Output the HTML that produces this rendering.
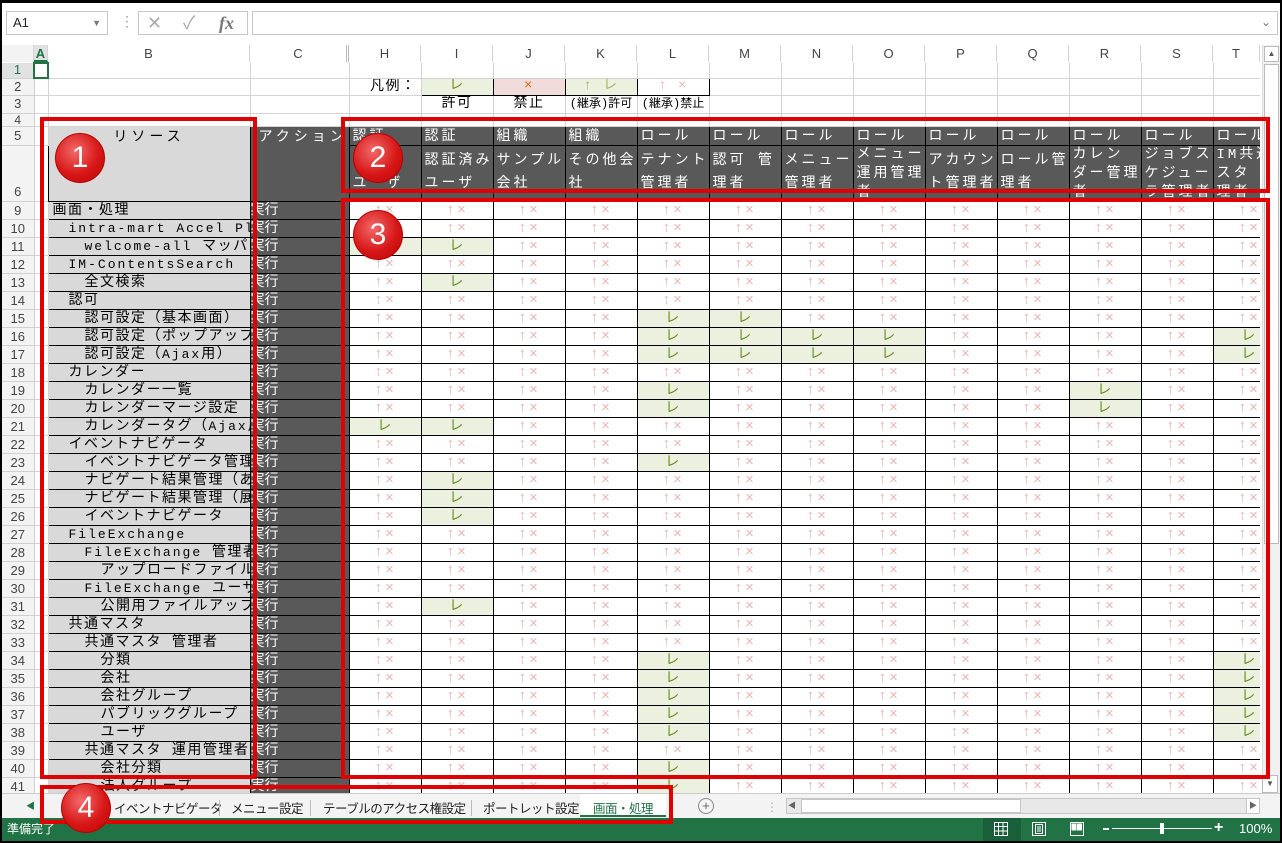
<!DOCTYPE html>
<html><head><meta charset="utf-8">
<style>
*{margin:0;padding:0;box-sizing:border-box}
body{width:1282px;height:843px;background:#000;position:relative;overflow:hidden;font-family:"Liberation Sans","Noto Sans CJK JP",sans-serif}
#win{position:absolute;left:2px;top:3px;width:1278px;height:838px;background:#fff;overflow:hidden}
.abs{position:absolute}
#grid{position:absolute;left:0;top:59px;width:1258px;height:731px;overflow:hidden}
table{border-collapse:collapse;table-layout:fixed;width:1283px;font-family:"Liberation Mono","Noto Sans CJK JP",monospace;font-size:14px;letter-spacing:1.5px}
td{border-right:1px solid #d4d4d4;border-bottom:1px solid #d4d4d4;white-space:nowrap;overflow:hidden;padding:0;line-height:14px}
td>div{overflow:hidden}
td.n{background:#f3f3f3;color:#444;text-align:center;font-family:"Liberation Sans",sans-serif;font-size:13px;letter-spacing:0;border-color:#d0d0d0}
tr.d td{height:18px;padding-top:1px}
.d td.r{background:#d9d9d9;border:1px solid #000;padding-left:4px}
.d td.c{background:#595959;color:#fff;border:1px solid #000;letter-spacing:0}
.d td.x{border:1px solid #000;text-align:center;color:#e6b8b7;font-size:15px;letter-spacing:2px}
.d td.g{border:1px solid #000;text-align:center;color:#6b8e23;background:#ebf1de;font-size:14px}
.h td.hd{background:#595959;color:#fff;border:1px solid #000;padding-left:3px;letter-spacing:3px;vertical-align:top}
.l{font-size:13px;letter-spacing:2px}
.i1{padding-left:20px!important}.i2{padding-left:36px!important}.i3{padding-left:52px!important}
.box{position:absolute;border:4px solid #e00000}
.cir{position:absolute;width:50px;height:50px;border-radius:50%;background:radial-gradient(circle at 40% 35%,#f26a6a,#d81818 55%,#b80000);border:1px solid #b00;color:#fff;font-size:30px;text-align:center;line-height:48px;font-family:"Liberation Sans",sans-serif}
.ch{position:absolute;top:42px;height:17px;font-size:13px;color:#444;text-align:center;border-right:1px solid #d4d4d4;line-height:17px;background:#fff}
.tab{position:absolute;top:794px;height:22px;font-size:12.5px;line-height:22px;color:#222;font-family:"Noto Sans CJK JP",sans-serif;letter-spacing:-0.5px}
.h6{height:55px;line-height:23px;padding-top:4px}
.h6b{height:55px;line-height:19px}
</style></head><body>
<div id="win">
<div class="abs" style="left:4px;top:8px;width:102px;height:24px;border:1px solid #c6c6c6;font-size:13px;line-height:22px;padding-left:6px;color:#222">A1<span style="position:absolute;right:6px;top:0;color:#777;font-size:9px">▼</span></div>
<div class="abs" style="left:118px;top:10px;color:#999;font-size:14px">⋮</div>
<div class="abs" style="left:136px;top:8px;width:110px;height:24px;border:1px solid #c6c6c6;color:#aaa;font-size:18px;line-height:22px"><span style="position:absolute;left:8px">✕</span><span style="position:absolute;left:44px">✓</span><span style="position:absolute;left:80px;font-family:'Liberation Serif',serif;font-style:italic;font-weight:bold;color:#777">fx</span></div>
<div class="abs" style="left:250px;top:8px;width:1026px;height:24px;border:1px solid #c6c6c6"><span style="position:absolute;right:6px;top:3px;color:#777;font-size:12px">⌄</span></div>
<div class="abs" style="left:0;top:42px;width:1258px;height:17px;background:#fff;border-bottom:1px solid #ccc"></div>
<div class="ch" style="left:0;width:32px;background:#f3f3f3"></div>
<div class="ch" style="left:32px;width:14px;color:#217346;font-weight:bold;background:#e1e1e1;border-bottom:2px solid #217346">A</div>
<div class="ch" style="left:46px;width:202px">B</div>
<div class="ch" style="left:248px;width:99px;border-right:3px double #bbb">C</div>
<div class="ch" style="left:347px;width:72px">H</div>
<div class="ch" style="left:419px;width:72px">I</div>
<div class="ch" style="left:491px;width:72px">J</div>
<div class="ch" style="left:563px;width:72px">K</div>
<div class="ch" style="left:635px;width:72px">L</div>
<div class="ch" style="left:707px;width:72px">M</div>
<div class="ch" style="left:779px;width:72px">N</div>
<div class="ch" style="left:851px;width:72px">O</div>
<div class="ch" style="left:923px;width:72px">P</div>
<div class="ch" style="left:995px;width:72px">Q</div>
<div class="ch" style="left:1067px;width:72px">R</div>
<div class="ch" style="left:1139px;width:72px">S</div>
<div class="ch" style="left:1211px;width:47px">T</div>
<div class="abs" style="left:1260px;top:42px;width:18px;height:748px;background:#f0f0f0;border-left:1px solid #ddd"></div>
<div class="abs" style="left:1262px;top:43px;width:15px;height:16px;border:1px solid #bbb;background:#fff;font-size:8px;text-align:center;color:#555;line-height:14px">▲</div>
<div class="abs" style="left:1262px;top:61px;width:15px;height:480px;border:1px solid #bbb;background:#fff"></div>
<div class="abs" style="left:1260px;top:772px;width:16px;height:18px;border:1px solid #bbb;background:#fff;font-size:8px;text-align:center;color:#555;line-height:16px">▼</div>

<div id="grid">
<table>
<colgroup><col style="width:32px"><col style="width:14px"><col style="width:202px"><col style="width:99px"><col style="width:72px"><col style="width:72px"><col style="width:72px"><col style="width:72px"><col style="width:72px"><col style="width:72px"><col style="width:72px"><col style="width:72px"><col style="width:72px"><col style="width:72px"><col style="width:72px"><col style="width:72px"><col style="width:72px"></colgroup>
<tr style="height:15px"><td class="n" style="color:#217346;background:#e1e1e1">1</td><td style="border:2px solid #217346"></td><td></td><td></td><td></td><td></td><td></td><td></td><td></td><td></td><td></td><td></td><td></td><td></td><td></td><td></td><td></td></tr>
<tr style="height:17px"><td class="n">2</td><td></td><td></td><td></td><td style="text-align:right;padding-right:4px"><div style="height:16px;line-height:16px">凡例：</div></td><td style="border:1px solid #000;background:#ebf1de;color:#6b8e23;text-align:center"><div style="height:15px;line-height:15px">レ</div></td><td style="border:1px solid #000;background:#f2dcdb;color:#e26b0a;text-align:center"><div style="height:15px;line-height:15px">×</div></td><td style="border:1px solid #000;background:#ebf1de;color:#9bbb59;text-align:center"><div style="height:15px;line-height:15px">↑ レ</div></td><td style="border:1px solid #000;color:#e6b8b7;text-align:center"><div style="height:15px;line-height:15px">↑ ×</div></td><td></td><td></td><td></td><td></td><td></td><td></td><td></td><td></td></tr>
<tr style="height:18px"><td class="n">3</td><td></td><td></td><td></td><td></td><td style="text-align:center"><div style="height:17px;line-height:17px">許可</div></td><td style="text-align:center"><div style="height:17px;line-height:17px">禁止</div></td><td style="text-align:center;font-size:12px;letter-spacing:0"><div style="height:17px;line-height:17px">(継承)許可</div></td><td style="text-align:center;font-size:12px;letter-spacing:0"><div style="height:17px;line-height:17px">(継承)禁止</div></td><td></td><td></td><td></td><td></td><td></td><td></td><td></td><td></td></tr>
<tr style="height:13px"><td class="n" style="font-size:12px"><div style="height:12px;line-height:12px">4</div></td><td></td><td></td><td></td><td></td><td></td><td></td><td></td><td></td><td></td><td></td><td></td><td></td><td></td><td></td><td></td><td></td></tr>
<tr class="h" style="height:19px"><td class="n"><div style="height:18px;line-height:18px">5</div></td><td></td><td rowspan="2" style="background:#d9d9d9;border:1px solid #000;vertical-align:top;text-align:center;letter-spacing:4px"><div style="height:74px;padding-top:4px;line-height:14px">リソース</div></td><td rowspan="2" style="background:#595959;color:#fff;border:1px solid #000;vertical-align:top;letter-spacing:4px;padding-left:8px"><div style="height:74px;padding-top:4px;line-height:14px">アクション</div></td><td class="hd"><div style="height:18px;line-height:20px">認証</div></td><td class="hd"><div style="height:18px;line-height:20px">認証</div></td><td class="hd"><div style="height:18px;line-height:20px">組織</div></td><td class="hd"><div style="height:18px;line-height:20px">組織</div></td><td class="hd"><div style="height:18px;line-height:20px">ロール</div></td><td class="hd"><div style="height:18px;line-height:20px">ロール</div></td><td class="hd"><div style="height:18px;line-height:20px">ロール</div></td><td class="hd"><div style="height:18px;line-height:20px">ロール</div></td><td class="hd"><div style="height:18px;line-height:20px">ロール</div></td><td class="hd"><div style="height:18px;line-height:20px">ロール</div></td><td class="hd"><div style="height:18px;line-height:20px">ロール</div></td><td class="hd"><div style="height:18px;line-height:20px">ロール</div></td><td class="hd"><div style="height:18px;line-height:20px">ロール</div></td></tr>
<tr class="h" style="height:56px"><td class="n" style="vertical-align:bottom"><div style="height:18px;line-height:18px">6</div></td><td></td>
<td class="hd"><div class="h6" style="padding-top:27px">ユーザ</div></td>
<td class="hd"><div class="h6">認証済み<br>ユーザ</div></td>
<td class="hd"><div class="h6">サンプル<br>会社</div></td>
<td class="hd"><div class="h6">その他会<br>社</div></td>
<td class="hd"><div class="h6">テナント<br>管理者</div></td>
<td class="hd"><div class="h6">認可 管<br>理者</div></td>
<td class="hd"><div class="h6">メニュー<br>管理者</div></td>
<td class="hd"><div class="h6b">メニュー<br>運用管理<br>者</div></td>
<td class="hd"><div class="h6">アカウン<br>ト管理者</div></td>
<td class="hd"><div class="h6">ロール管<br>理者</div></td>
<td class="hd"><div class="h6b">カレン<br>ダー管理<br>者</div></td>
<td class="hd"><div class="h6b">ジョブス<br>ケジュー<br>ラ管理者</div></td>
<td class="hd"><div class="h6b">IM共通マ<br>スタ 管<br>理者</div></td></tr>

<tr class="d"><td class="n">9</td><td></td><td class="r">画面・処理</td><td class="c">実行</td><td class="x">↑×</td><td class="x">↑×</td><td class="x">↑×</td><td class="x">↑×</td><td class="x">↑×</td><td class="x">↑×</td><td class="x">↑×</td><td class="x">↑×</td><td class="x">↑×</td><td class="x">↑×</td><td class="x">↑×</td><td class="x">↑×</td><td class="x">↑×</td></tr>
<tr class="d"><td class="n">10</td><td></td><td class="r i1"><span class="l">intra-mart Accel Platform</span></td><td class="c">実行</td><td class="x">↑×</td><td class="x">↑×</td><td class="x">↑×</td><td class="x">↑×</td><td class="x">↑×</td><td class="x">↑×</td><td class="x">↑×</td><td class="x">↑×</td><td class="x">↑×</td><td class="x">↑×</td><td class="x">↑×</td><td class="x">↑×</td><td class="x">↑×</td></tr>
<tr class="d"><td class="n">11</td><td></td><td class="r i2"><span class="l">welcome-all </span>マッパー</td><td class="c">実行</td><td class="g">レ</td><td class="g">レ</td><td class="x">↑×</td><td class="x">↑×</td><td class="x">↑×</td><td class="x">↑×</td><td class="x">↑×</td><td class="x">↑×</td><td class="x">↑×</td><td class="x">↑×</td><td class="x">↑×</td><td class="x">↑×</td><td class="x">↑×</td></tr>
<tr class="d"><td class="n">12</td><td></td><td class="r i1"><span class="l">IM-ContentsSearch</span></td><td class="c">実行</td><td class="x">↑×</td><td class="x">↑×</td><td class="x">↑×</td><td class="x">↑×</td><td class="x">↑×</td><td class="x">↑×</td><td class="x">↑×</td><td class="x">↑×</td><td class="x">↑×</td><td class="x">↑×</td><td class="x">↑×</td><td class="x">↑×</td><td class="x">↑×</td></tr>
<tr class="d"><td class="n">13</td><td></td><td class="r i2">全文検索</td><td class="c">実行</td><td class="x">↑×</td><td class="g">レ</td><td class="x">↑×</td><td class="x">↑×</td><td class="x">↑×</td><td class="x">↑×</td><td class="x">↑×</td><td class="x">↑×</td><td class="x">↑×</td><td class="x">↑×</td><td class="x">↑×</td><td class="x">↑×</td><td class="x">↑×</td></tr>
<tr class="d"><td class="n">14</td><td></td><td class="r i1">認可</td><td class="c">実行</td><td class="x">↑×</td><td class="x">↑×</td><td class="x">↑×</td><td class="x">↑×</td><td class="x">↑×</td><td class="x">↑×</td><td class="x">↑×</td><td class="x">↑×</td><td class="x">↑×</td><td class="x">↑×</td><td class="x">↑×</td><td class="x">↑×</td><td class="x">↑×</td></tr>
<tr class="d"><td class="n">15</td><td></td><td class="r i2">認可設定（基本画面）</td><td class="c">実行</td><td class="x">↑×</td><td class="x">↑×</td><td class="x">↑×</td><td class="x">↑×</td><td class="g">レ</td><td class="g">レ</td><td class="x">↑×</td><td class="x">↑×</td><td class="x">↑×</td><td class="x">↑×</td><td class="x">↑×</td><td class="x">↑×</td><td class="x">↑×</td></tr>
<tr class="d"><td class="n">16</td><td></td><td class="r i2">認可設定（ポップアップ）</td><td class="c">実行</td><td class="x">↑×</td><td class="x">↑×</td><td class="x">↑×</td><td class="x">↑×</td><td class="g">レ</td><td class="g">レ</td><td class="g">レ</td><td class="g">レ</td><td class="x">↑×</td><td class="x">↑×</td><td class="x">↑×</td><td class="x">↑×</td><td class="g">レ</td></tr>
<tr class="d"><td class="n">17</td><td></td><td class="r i2">認可設定（<span class="l">Ajax</span>用）</td><td class="c">実行</td><td class="x">↑×</td><td class="x">↑×</td><td class="x">↑×</td><td class="x">↑×</td><td class="g">レ</td><td class="g">レ</td><td class="g">レ</td><td class="g">レ</td><td class="x">↑×</td><td class="x">↑×</td><td class="x">↑×</td><td class="x">↑×</td><td class="g">レ</td></tr>
<tr class="d"><td class="n">18</td><td></td><td class="r i1">カレンダー</td><td class="c">実行</td><td class="x">↑×</td><td class="x">↑×</td><td class="x">↑×</td><td class="x">↑×</td><td class="x">↑×</td><td class="x">↑×</td><td class="x">↑×</td><td class="x">↑×</td><td class="x">↑×</td><td class="x">↑×</td><td class="x">↑×</td><td class="x">↑×</td><td class="x">↑×</td></tr>
<tr class="d"><td class="n">19</td><td></td><td class="r i2">カレンダー一覧</td><td class="c">実行</td><td class="x">↑×</td><td class="x">↑×</td><td class="x">↑×</td><td class="x">↑×</td><td class="g">レ</td><td class="x">↑×</td><td class="x">↑×</td><td class="x">↑×</td><td class="x">↑×</td><td class="x">↑×</td><td class="g">レ</td><td class="x">↑×</td><td class="x">↑×</td></tr>
<tr class="d"><td class="n">20</td><td></td><td class="r i2">カレンダーマージ設定</td><td class="c">実行</td><td class="x">↑×</td><td class="x">↑×</td><td class="x">↑×</td><td class="x">↑×</td><td class="g">レ</td><td class="x">↑×</td><td class="x">↑×</td><td class="x">↑×</td><td class="x">↑×</td><td class="x">↑×</td><td class="g">レ</td><td class="x">↑×</td><td class="x">↑×</td></tr>
<tr class="d"><td class="n">21</td><td></td><td class="r i2">カレンダータグ（<span class="l">Ajax</span>用）</td><td class="c">実行</td><td class="g">レ</td><td class="g">レ</td><td class="x">↑×</td><td class="x">↑×</td><td class="x">↑×</td><td class="x">↑×</td><td class="x">↑×</td><td class="x">↑×</td><td class="x">↑×</td><td class="x">↑×</td><td class="x">↑×</td><td class="x">↑×</td><td class="x">↑×</td></tr>
<tr class="d"><td class="n">22</td><td></td><td class="r i1">イベントナビゲータ</td><td class="c">実行</td><td class="x">↑×</td><td class="x">↑×</td><td class="x">↑×</td><td class="x">↑×</td><td class="x">↑×</td><td class="x">↑×</td><td class="x">↑×</td><td class="x">↑×</td><td class="x">↑×</td><td class="x">↑×</td><td class="x">↑×</td><td class="x">↑×</td><td class="x">↑×</td></tr>
<tr class="d"><td class="n">23</td><td></td><td class="r i2">イベントナビゲータ管理</td><td class="c">実行</td><td class="x">↑×</td><td class="x">↑×</td><td class="x">↑×</td><td class="x">↑×</td><td class="g">レ</td><td class="x">↑×</td><td class="x">↑×</td><td class="x">↑×</td><td class="x">↑×</td><td class="x">↑×</td><td class="x">↑×</td><td class="x">↑×</td><td class="x">↑×</td></tr>
<tr class="d"><td class="n">24</td><td></td><td class="r i2">ナビゲート結果管理（あ</td><td class="c">実行</td><td class="x">↑×</td><td class="g">レ</td><td class="x">↑×</td><td class="x">↑×</td><td class="x">↑×</td><td class="x">↑×</td><td class="x">↑×</td><td class="x">↑×</td><td class="x">↑×</td><td class="x">↑×</td><td class="x">↑×</td><td class="x">↑×</td><td class="x">↑×</td></tr>
<tr class="d"><td class="n">25</td><td></td><td class="r i2">ナビゲート結果管理（展</td><td class="c">実行</td><td class="x">↑×</td><td class="g">レ</td><td class="x">↑×</td><td class="x">↑×</td><td class="x">↑×</td><td class="x">↑×</td><td class="x">↑×</td><td class="x">↑×</td><td class="x">↑×</td><td class="x">↑×</td><td class="x">↑×</td><td class="x">↑×</td><td class="x">↑×</td></tr>
<tr class="d"><td class="n">26</td><td></td><td class="r i2">イベントナビゲータ</td><td class="c">実行</td><td class="x">↑×</td><td class="g">レ</td><td class="x">↑×</td><td class="x">↑×</td><td class="x">↑×</td><td class="x">↑×</td><td class="x">↑×</td><td class="x">↑×</td><td class="x">↑×</td><td class="x">↑×</td><td class="x">↑×</td><td class="x">↑×</td><td class="x">↑×</td></tr>
<tr class="d"><td class="n">27</td><td></td><td class="r i1"><span class="l">FileExchange</span></td><td class="c">実行</td><td class="x">↑×</td><td class="x">↑×</td><td class="x">↑×</td><td class="x">↑×</td><td class="x">↑×</td><td class="x">↑×</td><td class="x">↑×</td><td class="x">↑×</td><td class="x">↑×</td><td class="x">↑×</td><td class="x">↑×</td><td class="x">↑×</td><td class="x">↑×</td></tr>
<tr class="d"><td class="n">28</td><td></td><td class="r i2"><span class="l">FileExchange </span>管理者</td><td class="c">実行</td><td class="x">↑×</td><td class="x">↑×</td><td class="x">↑×</td><td class="x">↑×</td><td class="x">↑×</td><td class="x">↑×</td><td class="x">↑×</td><td class="x">↑×</td><td class="x">↑×</td><td class="x">↑×</td><td class="x">↑×</td><td class="x">↑×</td><td class="x">↑×</td></tr>
<tr class="d"><td class="n">29</td><td></td><td class="r i3">アップロードファイル</td><td class="c">実行</td><td class="x">↑×</td><td class="x">↑×</td><td class="x">↑×</td><td class="x">↑×</td><td class="x">↑×</td><td class="x">↑×</td><td class="x">↑×</td><td class="x">↑×</td><td class="x">↑×</td><td class="x">↑×</td><td class="x">↑×</td><td class="x">↑×</td><td class="x">↑×</td></tr>
<tr class="d"><td class="n">30</td><td></td><td class="r i2"><span class="l">FileExchange </span>ユーザ</td><td class="c">実行</td><td class="x">↑×</td><td class="x">↑×</td><td class="x">↑×</td><td class="x">↑×</td><td class="x">↑×</td><td class="x">↑×</td><td class="x">↑×</td><td class="x">↑×</td><td class="x">↑×</td><td class="x">↑×</td><td class="x">↑×</td><td class="x">↑×</td><td class="x">↑×</td></tr>
<tr class="d"><td class="n">31</td><td></td><td class="r i3">公開用ファイルアップ</td><td class="c">実行</td><td class="x">↑×</td><td class="g">レ</td><td class="x">↑×</td><td class="x">↑×</td><td class="x">↑×</td><td class="x">↑×</td><td class="x">↑×</td><td class="x">↑×</td><td class="x">↑×</td><td class="x">↑×</td><td class="x">↑×</td><td class="x">↑×</td><td class="x">↑×</td></tr>
<tr class="d"><td class="n">32</td><td></td><td class="r i1">共通マスタ</td><td class="c">実行</td><td class="x">↑×</td><td class="x">↑×</td><td class="x">↑×</td><td class="x">↑×</td><td class="x">↑×</td><td class="x">↑×</td><td class="x">↑×</td><td class="x">↑×</td><td class="x">↑×</td><td class="x">↑×</td><td class="x">↑×</td><td class="x">↑×</td><td class="x">↑×</td></tr>
<tr class="d"><td class="n">33</td><td></td><td class="r i2">共通マスタ 管理者</td><td class="c">実行</td><td class="x">↑×</td><td class="x">↑×</td><td class="x">↑×</td><td class="x">↑×</td><td class="x">↑×</td><td class="x">↑×</td><td class="x">↑×</td><td class="x">↑×</td><td class="x">↑×</td><td class="x">↑×</td><td class="x">↑×</td><td class="x">↑×</td><td class="x">↑×</td></tr>
<tr class="d"><td class="n">34</td><td></td><td class="r i3">分類</td><td class="c">実行</td><td class="x">↑×</td><td class="x">↑×</td><td class="x">↑×</td><td class="x">↑×</td><td class="g">レ</td><td class="x">↑×</td><td class="x">↑×</td><td class="x">↑×</td><td class="x">↑×</td><td class="x">↑×</td><td class="x">↑×</td><td class="x">↑×</td><td class="g">レ</td></tr>
<tr class="d"><td class="n">35</td><td></td><td class="r i3">会社</td><td class="c">実行</td><td class="x">↑×</td><td class="x">↑×</td><td class="x">↑×</td><td class="x">↑×</td><td class="g">レ</td><td class="x">↑×</td><td class="x">↑×</td><td class="x">↑×</td><td class="x">↑×</td><td class="x">↑×</td><td class="x">↑×</td><td class="x">↑×</td><td class="g">レ</td></tr>
<tr class="d"><td class="n">36</td><td></td><td class="r i3">会社グループ</td><td class="c">実行</td><td class="x">↑×</td><td class="x">↑×</td><td class="x">↑×</td><td class="x">↑×</td><td class="g">レ</td><td class="x">↑×</td><td class="x">↑×</td><td class="x">↑×</td><td class="x">↑×</td><td class="x">↑×</td><td class="x">↑×</td><td class="x">↑×</td><td class="g">レ</td></tr>
<tr class="d"><td class="n">37</td><td></td><td class="r i3">パブリックグループ</td><td class="c">実行</td><td class="x">↑×</td><td class="x">↑×</td><td class="x">↑×</td><td class="x">↑×</td><td class="g">レ</td><td class="x">↑×</td><td class="x">↑×</td><td class="x">↑×</td><td class="x">↑×</td><td class="x">↑×</td><td class="x">↑×</td><td class="x">↑×</td><td class="g">レ</td></tr>
<tr class="d"><td class="n">38</td><td></td><td class="r i3">ユーザ</td><td class="c">実行</td><td class="x">↑×</td><td class="x">↑×</td><td class="x">↑×</td><td class="x">↑×</td><td class="g">レ</td><td class="x">↑×</td><td class="x">↑×</td><td class="x">↑×</td><td class="x">↑×</td><td class="x">↑×</td><td class="x">↑×</td><td class="x">↑×</td><td class="g">レ</td></tr>
<tr class="d"><td class="n">39</td><td></td><td class="r i2">共通マスタ 運用管理者</td><td class="c">実行</td><td class="x">↑×</td><td class="x">↑×</td><td class="x">↑×</td><td class="x">↑×</td><td class="x">↑×</td><td class="x">↑×</td><td class="x">↑×</td><td class="x">↑×</td><td class="x">↑×</td><td class="x">↑×</td><td class="x">↑×</td><td class="x">↑×</td><td class="x">↑×</td></tr>
<tr class="d"><td class="n">40</td><td></td><td class="r i3">会社分類</td><td class="c">実行</td><td class="x">↑×</td><td class="x">↑×</td><td class="x">↑×</td><td class="x">↑×</td><td class="g">レ</td><td class="x">↑×</td><td class="x">↑×</td><td class="x">↑×</td><td class="x">↑×</td><td class="x">↑×</td><td class="x">↑×</td><td class="x">↑×</td><td class="x">↑×</td></tr>
<tr class="d"><td class="n">41</td><td></td><td class="r i3">法人グループ</td><td class="c">実行</td><td class="x">↑×</td><td class="x">↑×</td><td class="x">↑×</td><td class="x">↑×</td><td class="g">レ</td><td class="x">↑×</td><td class="x">↑×</td><td class="x">↑×</td><td class="x">↑×</td><td class="x">↑×</td><td class="x">↑×</td><td class="x">↑×</td><td class="x">↑×</td></tr>
</table>
</div>

<div class="abs" style="left:0;top:790px;width:1278px;height:25px;background:#f3f3f3;border-top:1px solid #ccc"></div>
<div class="abs" style="left:24px;top:796px;font-size:9px;color:#217346">◀</div>
<div class="tab" style="left:112px">イベントナビゲータ</div>
<div class="abs" style="left:217px;top:797px;width:1px;height:16px;background:#bbb"></div>
<div class="tab" style="left:229px">メニュー設定</div>
<div class="abs" style="left:308px;top:797px;width:1px;height:16px;background:#bbb"></div>
<div class="tab" style="left:321px">テーブルのアクセス権設定</div>
<div class="abs" style="left:469px;top:797px;width:1px;height:16px;background:#bbb"></div>
<div class="tab" style="left:481px">ポートレット設定</div>
<div class="abs" style="left:578px;top:791px;width:86px;height:23px;background:#fff;border-bottom:2px solid #217346"></div>
<div class="tab" style="left:591px;color:#217346">画面・処理</div>
<div class="abs" style="left:696px;top:795px;width:16px;height:16px;border:1px solid #888;border-radius:50%;color:#666;font-size:13px;line-height:13px;text-align:center">+</div>
<div class="abs" style="left:764px;top:797px;color:#aaa;font-size:12px">⋮</div>
<div class="abs" style="left:784px;top:795px;width:474px;height:16px;background:#e8e8e8;border:1px solid #c6c6c6"></div>
<div class="abs" style="left:786px;top:796px;width:14px;height:14px;font-size:8px;color:#666;line-height:14px">◀</div>
<div class="abs" style="left:799px;top:796px;width:220px;height:14px;background:#fff;border:1px solid #c6c6c6"></div>
<div class="abs" style="left:1244px;top:796px;width:13px;height:14px;background:#fff;border-left:1px solid #c6c6c6;font-size:8px;color:#666;line-height:14px;text-align:center">▶</div>
<div class="abs" style="left:0;top:815px;width:1278px;height:23px;background:#217346"></div>
<div class="abs" style="left:5px;top:818px;color:#fff;font-size:12px;font-family:'Noto Sans CJK JP',sans-serif;line-height:16px">準備完了</div>
<div class="abs" style="left:981px;top:815px;width:38px;height:23px;background:#19603a"></div>
<svg class="abs" style="left:991px;top:818px" width="16" height="16" viewBox="0 0 16 16" fill="none" stroke="#fff" stroke-width="1"><rect x="1.5" y="1.5" width="13" height="13"/><path d="M1.5 5.5h13M1.5 10h13M5.5 1.5v13M10 1.5v13"/></svg>
<svg class="abs" style="left:1029px;top:818px" width="16" height="16" viewBox="0 0 16 16" fill="none" stroke="#fff" stroke-width="1"><rect x="1.5" y="1.5" width="13" height="13"/><rect x="4.5" y="3.5" width="7" height="9"/><path d="M6 6h4M6 8h4M6 10h4"/></svg>
<svg class="abs" style="left:1067px;top:818px" width="16" height="16" viewBox="0 0 16 16" fill="none" stroke="#fff" stroke-width="1"><rect x="1.5" y="1.5" width="13" height="13"/><rect x="3" y="3" width="4" height="6" fill="#fff"/><rect x="8.5" y="3" width="4" height="6" fill="#fff"/></svg>
<div class="abs" style="left:1101px;top:825px;width:6px;height:2px;background:#fff"></div>
<div class="abs" style="left:1110px;top:825px;width:100px;height:1px;background:#fff"></div>
<div class="abs" style="left:1158px;top:820px;width:4px;height:11px;background:#fff"></div>
<div class="abs" style="left:1212px;top:817px;color:#fff;font-size:16px;font-weight:bold;line-height:16px">+</div>
<div class="abs" style="left:1237px;top:818px;color:#fff;font-size:13px;line-height:16px">100%</div>

<div class="box" style="left:38px;top:114px;width:217px;height:662px"></div>
<div class="box" style="left:339px;top:114px;width:929px;height:76px"></div>
<div class="box" style="left:339px;top:195px;width:929px;height:581px"></div>
<div class="box" style="left:38px;top:782px;width:633px;height:39px"></div>
<div class="cir" style="left:53px;top:130px">1</div>
<div class="cir" style="left:351px;top:130px">2</div>
<div class="cir" style="left:351px;top:207px">3</div>
<div class="cir" style="left:59px;top:780px">4</div>
</div>
</body></html>
